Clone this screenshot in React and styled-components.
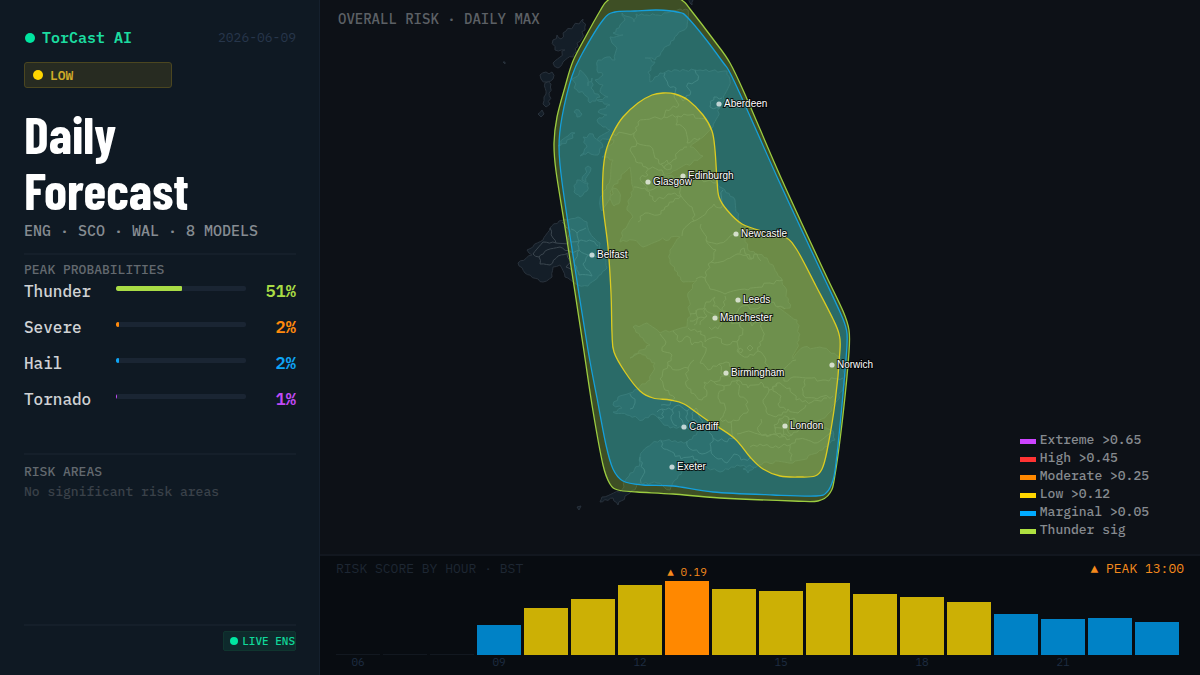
import React from 'react'
import styled, { createGlobalStyle } from 'styled-components'

const mono = '"IBM Plex Mono", "Liberation Mono", "DejaVu Sans Mono", monospace'

const probabilities = [
    { name: 'Thunder', value: 51, color: '#a9dc45' },
    { name: 'Severe', value: 2, color: '#ff8a0c' },
    { name: 'Hail', value: 2, color: '#0ea5f5' },
    { name: 'Tornado', value: 1, color: '#c04af5' },
]

const legend = [
    { text: 'Extreme >0.65', color: '#cc44ff' },
    { text: 'High >0.45', color: '#ff3333' },
    { text: 'Moderate >0.25', color: '#ff8800' },
    { text: 'Low >0.12', color: '#ffd600' },
    { text: 'Marginal >0.05', color: '#00aaff' },
    { text: 'Thunder sig', color: '#aee040' },
]

// bar heights in px, first bar is 06:00
const hours = [0, 0, 0, 30, 47, 56, 70, 74, 66, 64, 72, 61, 58, 53, 41, 36, 37, 33]
const PEAK = 7

const cities = [
    ['Aberdeen', 719, 104],
    ['Edinburgh', 683, 176],
    ['Glasgow', 648, 182],
    ['Newcastle', 736, 234],
    ['Belfast', 592, 255],
    ['Leeds', 738, 300],
    ['Manchester', 715, 318],
    ['Norwich', 832, 365],
    ['Birmingham', 726, 373],
    ['London', 785, 426],
    ['Cardiff', 684, 427],
    ['Exeter', 672, 467],
]

const thunderArea = [[607, 1], [600, 11], [586, 36], [573, 61], [565, 87], [557, 117], [554, 143], [556, 171], [567, 240], [583, 345], [593, 411], [603, 465], [610, 484], [618, 490], [637, 492], [673, 494], [720, 498], [793, 501], [818, 501], [830, 493], [835, 475], [843, 415], [849, 352], [849, 330], [843, 311], [823, 269], [782, 180], [747, 99], [730, 63], [713, 39], [690, 9], [683, 1], [672, -2], [618, -2]]
const marginalArea = [[615, 12], [635, 11], [657, 10], [677, 12], [689, 19], [722, 61], [735, 83], [778, 179], [819, 267], [840, 312], [846, 328], [847, 345], [842, 405], [836, 463], [833, 480], [827, 492], [816, 496], [773, 495], [713, 492], [673, 486], [643, 485], [623, 481], [613, 469], [606, 445], [597, 398], [588, 350], [574, 262], [562, 182], [559, 147], [562, 117], [572, 76], [582, 54], [603, 20]]
const lowArea = [[663, 93], [675, 94], [688, 100], [703, 115], [712, 131], [715, 150], [717, 180], [719, 197], [727, 210], [742, 224], [765, 232], [785, 237], [797, 250], [816, 286], [833, 319], [839, 334], [840, 350], [835, 403], [827, 451], [822, 469], [815, 476], [800, 477], [780, 476], [763, 469], [750, 457], [734, 438], [707, 420], [684, 404], [670, 400], [653, 398], [640, 391], [625, 372], [614, 352], [612, 333], [611, 293], [608, 247], [603, 205], [603, 173], [606, 151], [613, 133], [623, 117], [638, 103], [652, 95]]

const mainland = [[622, 13], [630, 17], [634, 22], [636, 14], [647, 15], [658, 15], [670, 12], [680, 9], [688, 10], [687, 27], [677, 35], [663, 50], [655, 60], [645, 58], [655, 62], [648, 72], [650, 82], [660, 73], [677, 70], [700, 70], [727, 71], [730, 80], [722, 103], [713, 127], [703, 137], [690, 147], [697, 151], [703, 156], [692, 163], [673, 171], [663, 175], [683, 178], [703, 177], [715, 181], [722, 188], [735, 200], [738, 217], [743, 233], [748, 250], [767, 258], [777, 273], [785, 287], [790, 308], [777, 307], [797, 320], [799, 340], [793, 359], [804, 347], [823, 348], [840, 357], [845, 375], [843, 390], [827, 415], [808, 425], [833, 431], [835, 440], [817, 453], [793, 463], [767, 462], [750, 468], [737, 465], [720, 472], [705, 466], [687, 468], [675, 480], [670, 490], [657, 483], [640, 483], [630, 493], [618, 505], [613, 498], [600, 502], [602, 497], [620, 492], [627, 478], [640, 463], [640, 457], [647, 447], [660, 440], [687, 442], [700, 430], [683, 428], [670, 428], [653, 414], [643, 420], [627, 415], [613, 412], [622, 408], [613, 405], [618, 397], [630, 393], [650, 380], [655, 363], [640, 353], [630, 358], [650, 345], [643, 338], [633, 327], [647, 323], [660, 333], [687, 327], [690, 313], [688, 293], [697, 280], [683, 282], [670, 263], [670, 250], [680, 237], [660, 240], [643, 247], [633, 240], [620, 242], [623, 230], [633, 217], [627, 210], [633, 187], [630, 167], [618, 180], [602, 211], [600, 200], [610, 180], [613, 160], [602, 157], [614, 140], [597, 140], [610, 130], [603, 127], [597, 120], [607, 115], [598, 112], [610, 105], [597, 100], [608, 97], [600, 92], [603, 85], [595, 80], [603, 75], [597, 70], [598, 60], [607, 57], [615, 60], [617, 48], [612, 43], [610, 37], [623, 35], [613, 33], [620, 25], [625, 20]]
const ireland = [[559, 221], [550, 228], [543, 240], [527, 250], [532, 255], [518, 263], [525, 273], [543, 282], [552, 277], [553, 267], [560, 265], [565, 277], [578, 285], [588, 286], [595, 280], [607, 268], [606, 257], [598, 257], [600, 243], [590, 233], [587, 222], [578, 217], [568, 220]]

const islands = [
    [[583, 19], [585, 30], [577, 43], [573, 57], [563, 62], [558, 68], [553, 63], [565, 50], [555, 50], [553, 40], [557, 35], [561, 39], [566, 31]],
    [[540, 75], [546, 72], [552, 72], [553, 79], [547, 82], [541, 79]],
    [[545, 83], [551, 84], [549, 93], [550, 104], [546, 107], [543, 104], [546, 94]],
    [[538, 114], [542, 110], [544, 114], [541, 117]],
    [[580, 70], [586, 76], [588, 86], [592, 78], [591, 88], [600, 97], [590, 103], [586, 96], [577, 90], [572, 79], [576, 77]],
    [[583, 137], [593, 134], [603, 147], [598, 155], [588, 152], [580, 156], [587, 147]],
    [[577, 180], [588, 183], [587, 191], [580, 197], [574, 192]],
    [[588, 166], [582, 180], [586, 182], [591, 168]],
    [[558, 146], [568, 136], [575, 133], [570, 139]],
    [[574, 112], [579, 110], [582, 114], [577, 117]],
    [[613, 188], [619, 192], [620, 201], [614, 206], [610, 199]],
    [[743, 469], [750, 465], [754, 468], [748, 473]],
    [[577, 507], [581, 506], [579, 510]],
    [[503, 62], [505, 62], [505, 64]],
    [[689, -2], [693, 0], [692, 5], [690, 3]],
]

const borders = [
    // scottish councils
    [[665, 73], [668, 85], [676, 88], [674, 97], [679, 105], [666, 110], [664, 117]],
    [[695, 70], [698, 80], [688, 83], [690, 95], [683, 101], [676, 95]],
    [[722, 98], [714, 97], [710, 107], [720, 108]],
    [[613, 134], [634, 133], [638, 122], [652, 118], [664, 117], [678, 116], [690, 115], [707, 121]],
    [[678, 116], [676, 125], [685, 129], [687, 143], [700, 138]],
    [[634, 133], [637, 143], [630, 150], [636, 162], [646, 167], [648, 175], [640, 178]],
    [[637, 143], [650, 146], [655, 158], [664, 168], [673, 160], [680, 150], [687, 147]],
    [[664, 168], [671, 169], [667, 160], [661, 164]],
    [[646, 167], [662, 170], [662, 180], [675, 182], [692, 178], [716, 183]],
    [[634, 187], [645, 188], [655, 202], [668, 194], [681, 196], [683, 182]],
    [[640, 178], [647, 190], [657, 187], [662, 180]],
    [[638, 222], [645, 213], [658, 215], [665, 207], [681, 196], [692, 207], [694, 221], [683, 230], [682, 236]],
    [[694, 221], [707, 211], [714, 204], [721, 208], [723, 190]],
    // northern england
    [[701, 224], [706, 240], [720, 243], [730, 236], [745, 235]],
    [[706, 240], [716, 250], [711, 262], [727, 259], [740, 254], [752, 259]],
    [[711, 262], [705, 278], [696, 279]],
    [[705, 278], [710, 289], [725, 294], [748, 290], [770, 283], [783, 280]],
    [[740, 253], [744, 248], [750, 258], [757, 254], [761, 261]],
    [[690, 314], [703, 309], [706, 302], [715, 297], [713, 306], [722, 311], [725, 296]],
    [[700, 325], [707, 316], [705, 308], [713, 314], [722, 318], [718, 329], [709, 327]],
    [[690, 321], [698, 318], [707, 316]],
    [[696, 310], [698, 318], [694, 325]],
    [[722, 311], [736, 314], [742, 306], [756, 309], [768, 300], [785, 309]],
    [[725, 319], [735, 323], [746, 319], [752, 326], [764, 320], [767, 311]],
    // wales and midlands
    [[660, 334], [666, 342], [662, 351], [672, 355], [668, 365], [676, 370], [688, 368], [694, 360]],
    [[673, 331], [679, 342], [687, 336], [692, 345], [701, 341], [706, 351]],
    [[688, 328], [701, 331], [705, 342], [716, 337], [727, 345], [739, 339]],
    [[706, 351], [700, 363], [708, 370], [719, 364], [724, 376], [714, 382]],
    [[719, 364], [726, 362], [733, 367], [731, 377], [724, 376]],
    [[739, 339], [743, 329], [737, 321]],
    [[739, 339], [737, 351], [748, 357], [758, 351], [763, 337], [762, 323]],
    [[758, 351], [766, 360], [766, 374], [781, 370], [796, 360]],
    [[740, 348], [743, 350], [741, 353], [738, 351], [740, 348]],
    [[750, 345], [753, 348], [750, 351], [747, 348], [750, 345]],
    [[668, 365], [660, 379], [665, 390], [675, 398], [670, 405], [661, 405]],
    [[688, 368], [686, 385], [691, 393], [702, 400], [707, 393], [704, 382], [714, 382]],
    [[714, 382], [724, 386], [738, 380], [748, 388], [761, 382], [769, 390], [777, 383], [790, 388]],
    [[781, 370], [784, 381], [793, 377], [809, 378], [823, 380], [843, 378]],
    [[805, 379], [803, 395], [817, 399], [833, 396]],
    [[790, 388], [796, 400], [812, 402], [827, 398]],
    [[724, 386], [718, 398], [725, 406], [720, 419], [731, 422], [735, 438]],
    [[738, 380], [740, 397], [748, 402], [747, 413], [739, 420], [731, 422]],
    [[769, 390], [763, 400], [766, 411], [776, 417], [788, 409], [798, 413], [806, 405]],
    [[777, 383], [773, 391], [781, 396], [778, 404], [786, 410]],
    [[750, 447], [760, 444], [770, 447], [790, 445], [791, 461]],
    [[737, 434], [752, 432], [766, 435], [777, 435]],
    [[790, 445], [799, 439], [814, 443], [832, 433]],
    [[761, 419], [758, 431], [767, 437], [777, 435], [790, 439]],
    // london boroughs
    [[774, 425], [779, 419], [788, 417], [796, 421], [799, 429], [792, 435], [782, 436], [775, 431], [774, 425]],
    [[779, 419], [783, 427], [782, 436]],
    [[788, 417], [786, 427], [792, 435]],
    [[774, 428], [786, 427], [799, 426]],
    // south wales valleys and south west
    [[630, 394], [635, 403], [630, 409]],
    [[657, 412], [662, 409], [672, 410], [679, 405], [687, 411], [696, 408], [700, 418], [704, 430]],
    [[672, 410], [671, 419], [677, 426]],
    [[679, 411], [682, 420], [681, 427]],
    [[687, 411], [687, 420], [693, 427]],
    [[694, 411], [692, 419], [699, 424]],
    [[662, 409], [664, 417], [658, 417]],
    [[661, 441], [664, 449], [674, 453], [681, 459], [693, 456], [698, 463]],
    [[687, 441], [690, 449], [702, 454], [711, 450], [713, 438], [709, 426]],
    [[713, 438], [724, 441], [735, 438]],
    [[711, 450], [718, 459], [727, 463], [734, 454], [741, 460], [750, 458]],
    [[640, 457], [644, 469], [641, 483]],
]

const irelandBorders = [
    [[550, 228], [553, 238], [556, 243], [543, 242], [533, 254]],
    [[556, 243], [568, 244], [570, 231], [562, 222]],
    [[533, 254], [539, 257], [547, 250], [560, 247], [571, 252]],
    [[539, 257], [540, 264], [550, 265], [558, 256], [568, 253]],
    [[571, 229], [577, 233], [586, 228]],
    [[571, 242], [581, 240], [592, 241], [598, 246]],
    [[571, 252], [579, 250], [588, 255], [598, 257]],
    [[577, 233], [579, 250], [574, 262], [579, 275], [592, 276]],
    [[588, 255], [583, 264], [592, 276]],
    [[567, 254], [571, 262], [566, 267], [572, 270]],
]

// closed curve through every point
function smooth(points) {
    const at = i => points[(i + points.length) % points.length]
    let d = `M${points[0]}`
    points.forEach((p, i) => {
        const prev = at(i - 1)
        const next = at(i + 1)
        const after = at(i + 2)
        d += `C${p[0] + (next[0] - prev[0]) / 6},${p[1] + (next[1] - prev[1]) / 6} ${next[0] - (after[0] - p[0]) / 6},${next[1] - (after[1] - p[1]) / 6} ${next}`
    })
    return d + 'Z'
}

// splits each edge in small steps and pushes them aside, so it reads as a coastline
function rough(points, amount, closed) {
    const list = closed ? [...points, points[0]] : points
    let d = `M${list[0]}`
    for (let i = 1; i < list.length; i++) {
        const [x1, y1] = list[i - 1]
        const [x2, y2] = list[i]
        const length = Math.hypot(x2 - x1, y2 - y1) || 1
        const steps = Math.max(1, Math.round(length / 3))
        for (let s = 1; s < steps; s++) {
            const seed = Math.sin(x1 * 12.9 + y2 * 78.2 + s * 37.7) * 43758.5
            const push = (seed - Math.floor(seed) - 0.5) * amount
            const x = x1 + ((x2 - x1) * s) / steps - ((y2 - y1) / length) * push
            const y = y1 + ((y2 - y1) * s) / steps + ((x2 - x1) / length) * push
            d += `L${x.toFixed(1)},${y.toFixed(1)}`
        }
        d += `L${x2},${y2}`
    }
    return closed ? d + 'Z' : d
}

function RiskMap() {
    return (
        <MapSvg viewBox="320 0 880 554" role="img" aria-label="Overall risk map">
            <g fill="#141e28" stroke="#29323c" strokeWidth="1">
                <path d={rough(mainland, 3, true)} />
                {islands.map((points, i) => <path key={i} d={rough(points, 4, true)} />)}
                <path d={rough(ireland, 2, true)} />
            </g>
            <g fill="none" stroke="#3b464f" strokeWidth="1">
                {borders.map((points, i) => <path key={i} d={rough(points, 4)} />)}
                {irelandBorders.map((points, i) => <path key={i} d={rough(points, 2)} />)}
            </g>
            <path d={smooth(thunderArea)} fill="#aee045" fillOpacity="0.3" stroke="#9ccc40" strokeWidth="1.3" />
            <path d={smooth(marginalArea)} fill="#00aaff" fillOpacity="0.31" stroke="#159fdb" strokeWidth="1.3" />
            <path d={smooth(lowArea)} fill="#ffd600" fillOpacity="0.31" stroke="#dccb22" strokeWidth="1.3" />
            {cities.map(([name, x, y]) => (
                <g key={name}>
                    <circle cx={x} cy={y} r="2.6" fill="#fff" fillOpacity="0.7" />
                    <City x={x + 5} y={y + 3}>{name}</City>
                </g>
            ))}
        </MapSvg>
    )
}

export default function App() {
    return (
        <Page>
            <GlobalStyle />
            <Sidebar>
                <Header>
                    <Brand><Dot color="#00e5a0" />TorCast AI</Brand>
                    <DateText>2026-06-09</DateText>
                </Header>
                <RiskBadge><Dot color="#ffd600" />LOW</RiskBadge>
                <Title>Daily<br />Forecast</Title>
                <Subtitle>ENG · SCO · WAL · 8 MODELS</Subtitle>
                <Peaks>
                    <Label>PEAK PROBABILITIES</Label>
                    {probabilities.map(p => (
                        <Row key={p.name}>
                            <Name>{p.name}</Name>
                            <Track><Fill color={p.color} style={{ width: `${p.value}%` }} /></Track>
                            <Value color={p.color}>{p.value}%</Value>
                        </Row>
                    ))}
                </Peaks>
                <Areas>
                    <Label>RISK AREAS</Label>
                    <Empty>No significant risk areas</Empty>
                </Areas>
                <Footer>
                    <Live><Dot $small color="#00e5a0" />LIVE ENS</Live>
                </Footer>
            </Sidebar>
            <Main>
                <MapPanel>
                    <RiskMap />
                    <MapTitle>OVERALL RISK · DAILY MAX</MapTitle>
                    <Legend>
                        {legend.map(item => (
                            <LegendItem key={item.text}><Swatch color={item.color} />{item.text}</LegendItem>
                        ))}
                    </Legend>
                </MapPanel>
                <Chart>
                    <ChartHead>
                        <ChartTitle>RISK SCORE BY HOUR · BST</ChartTitle>
                        <PeakTime>▲ PEAK 13:00</PeakTime>
                    </ChartHead>
                    <Bars>
                        {hours.map((h, i) => (
                            <Column key={i}>
                                {i === PEAK && <PeakLabel>▲ 0.19</PeakLabel>}
                                <Bar $peak={i === PEAK} $low={h > 45} $empty={h === 0} style={{ height: Math.max(h, 1) }} />
                                <Hour>{i % 3 === 0 && String(i + 6).padStart(2, '0')}</Hour>
                            </Column>
                        ))}
                    </Bars>
                </Chart>
            </Main>
        </Page>
    )
}

const GlobalStyle = createGlobalStyle`
    * {
        box-sizing: border-box;
    }
    body {
        margin: 0;
        background: #0d1117;
        font-family: ${mono};
    }
    h1, h2, p, ul {
        margin: 0;
        padding: 0;
        font-weight: 400;
    }
`

const Page = styled.div`
    display: flex;
    min-height: 100vh;
`

const Sidebar = styled.aside`
    display: flex;
    flex-direction: column;
    flex: 0 0 320px;
    padding: 28px 23px 24px 24px;
    background: #0f1923;
    border-right: 1px solid #15202d;
`

const Header = styled.header`
    display: flex;
    justify-content: space-between;
    line-height: 20px;
`

const Brand = styled.div`
    display: flex;
    align-items: center;
    gap: 7px;
    font-size: 15px;
    font-weight: 600;
    color: #1cdca0;
`

const Dot = styled.span`
    width: ${p => (p.$small ? 8 : 10)}px;
    height: ${p => (p.$small ? 8 : 10)}px;
    margin-left: 1px;
    border-radius: 50%;
    background: ${p => p.color};
`

const DateText = styled.time`
    font-size: 13px;
    color: #27364b;
`

const RiskBadge = styled.div`
    display: flex;
    align-items: center;
    gap: 7px;
    width: 148px;
    height: 26px;
    margin-top: 14px;
    padding: 0 7px;
    border: 1px solid #4b4620;
    border-radius: 3px;
    background: #272b21;
    color: #d0aa28;
    font-size: 13px;
    font-weight: 600;
`

const Title = styled.h1`
    && {
        margin-top: 17px;
        font-weight: 700;
    }
    color: #fff;
    font-family: "Barlow Condensed", "Liberation Sans", sans-serif;
    font-size: 52px;
    line-height: 56px;
`

const Subtitle = styled.p`
    padding-top: 4px;
    color: #868c92;
    font-size: 15px;
    font-weight: 500;
    line-height: 20px;
`

const Peaks = styled.section`
    min-height: 200px;
    margin-top: 12px;
    padding-top: 6px;
    border-top: 2px solid #151f2a;
`

const Label = styled.h2`
    && {
        font-weight: 500;
    }
    color: #63696f;
    font-size: 13px;
    line-height: 18px;
`

const Row = styled.div`
    display: flex;
    height: 36px;
    line-height: 24px;
`

const Name = styled.span`
    width: 92px;
    color: #cfd2d5;
    font-size: 16px;
    font-weight: 500;
`

const Track = styled.div`
    flex: 1;
    height: 5px;
    margin-top: 7px;
    border-radius: 2px;
    background: #1a2533;
    overflow: hidden;
`

const Fill = styled.div`
    height: 100%;
    border-radius: 1px;
    background: ${p => p.color};
`

const Value = styled.span`
    width: 50px;
    color: ${p => p.color};
    font-size: 17px;
    font-weight: 600;
    text-align: right;
`

const Areas = styled.section`
    padding-top: 8px;
    border-top: 2px solid #151f2a;
`

const Empty = styled.p`
    && {
        font-weight: 500;
    }
    color: #3a4149;
    font-size: 13px;
    line-height: 22px;
`

const Footer = styled.footer`
    display: flex;
    justify-content: flex-end;
    margin-top: auto;
    padding-top: 5px;
    border-top: 2px solid #151f2a;
`

const Live = styled.div`
    display: flex;
    align-items: center;
    gap: 4px;
    height: 20px;
    padding: 0 0 0 5px;
    border: 1px solid #10352f;
    border-radius: 2px;
    background: #0e2a2c;
    color: #10d89a;
    font-size: 11px;
    font-weight: 500;
`

const Main = styled.main`
    display: flex;
    flex-direction: column;
    flex: 1;
    min-width: 0;
`

const MapPanel = styled.section`
    position: relative;
    flex: 1;
    padding: 9px 18px;
    background: #0d1117;
`

const MapSvg = styled.svg`
    position: absolute;
    inset: 0;
    width: 100%;
    height: 100%;
`

const City = styled.text`
    fill: #fff;
    stroke: #000;
    stroke-width: 2px;
    stroke-opacity: 0.8;
    paint-order: stroke;
    font-family: "Liberation Sans", sans-serif;
    font-size: 10px;
`

const MapTitle = styled.h2`
    && {
        font-weight: 500;
    }
    position: relative;
    color: #5c6065;
    font-size: 14px;
    line-height: 20px;
`

const Legend = styled.ul`
    position: absolute;
    right: 51px;
    bottom: 15px;
    list-style: none;
`

const LegendItem = styled.li`
    display: flex;
    align-items: center;
    gap: 4px;
    color: #868a8f;
    font-size: 13px;
    font-weight: 500;
    line-height: 18px;
`

const Swatch = styled.span`
    width: 16px;
    height: 5px;
    margin-top: 2px;
    background: ${p => p.color};
`

const Chart = styled.section`
    padding: 4px 16px 5px;
    border-top: 2px solid #12171f;
    background: #080c11;
`

const ChartHead = styled.div`
    display: flex;
    justify-content: space-between;
    height: 18px;
    font-size: 13px;
    line-height: 18px;
`

const ChartTitle = styled.h2`
    color: #1e2733;
    font-size: 13px;
`

const PeakTime = styled.span`
    color: #f58a1c;
`

const Bars = styled.div`
    display: flex;
    align-items: flex-end;
    gap: 3px;
    height: 92px;
    margin-right: 5px;
`

const Column = styled.div`
    display: flex;
    flex: 1;
    flex-direction: column;
    align-items: center;
    min-width: 0;
`

const barColor = p => {
    if (p.$empty) return '#121820'
    if (p.$peak) return '#ff8800'
    return p.$low ? '#ccb005' : '#0082c6'
}

const Bar = styled.div`
    width: 100%;
    background: ${barColor};
`

const PeakLabel = styled.span`
    color: #f58a1c;
    font-size: 11px;
    line-height: 18px;
    white-space: nowrap;
`

const Hour = styled.span`
    height: 15px;
    color: #1e2c42;
    font-size: 11px;
    line-height: 14px;
`
